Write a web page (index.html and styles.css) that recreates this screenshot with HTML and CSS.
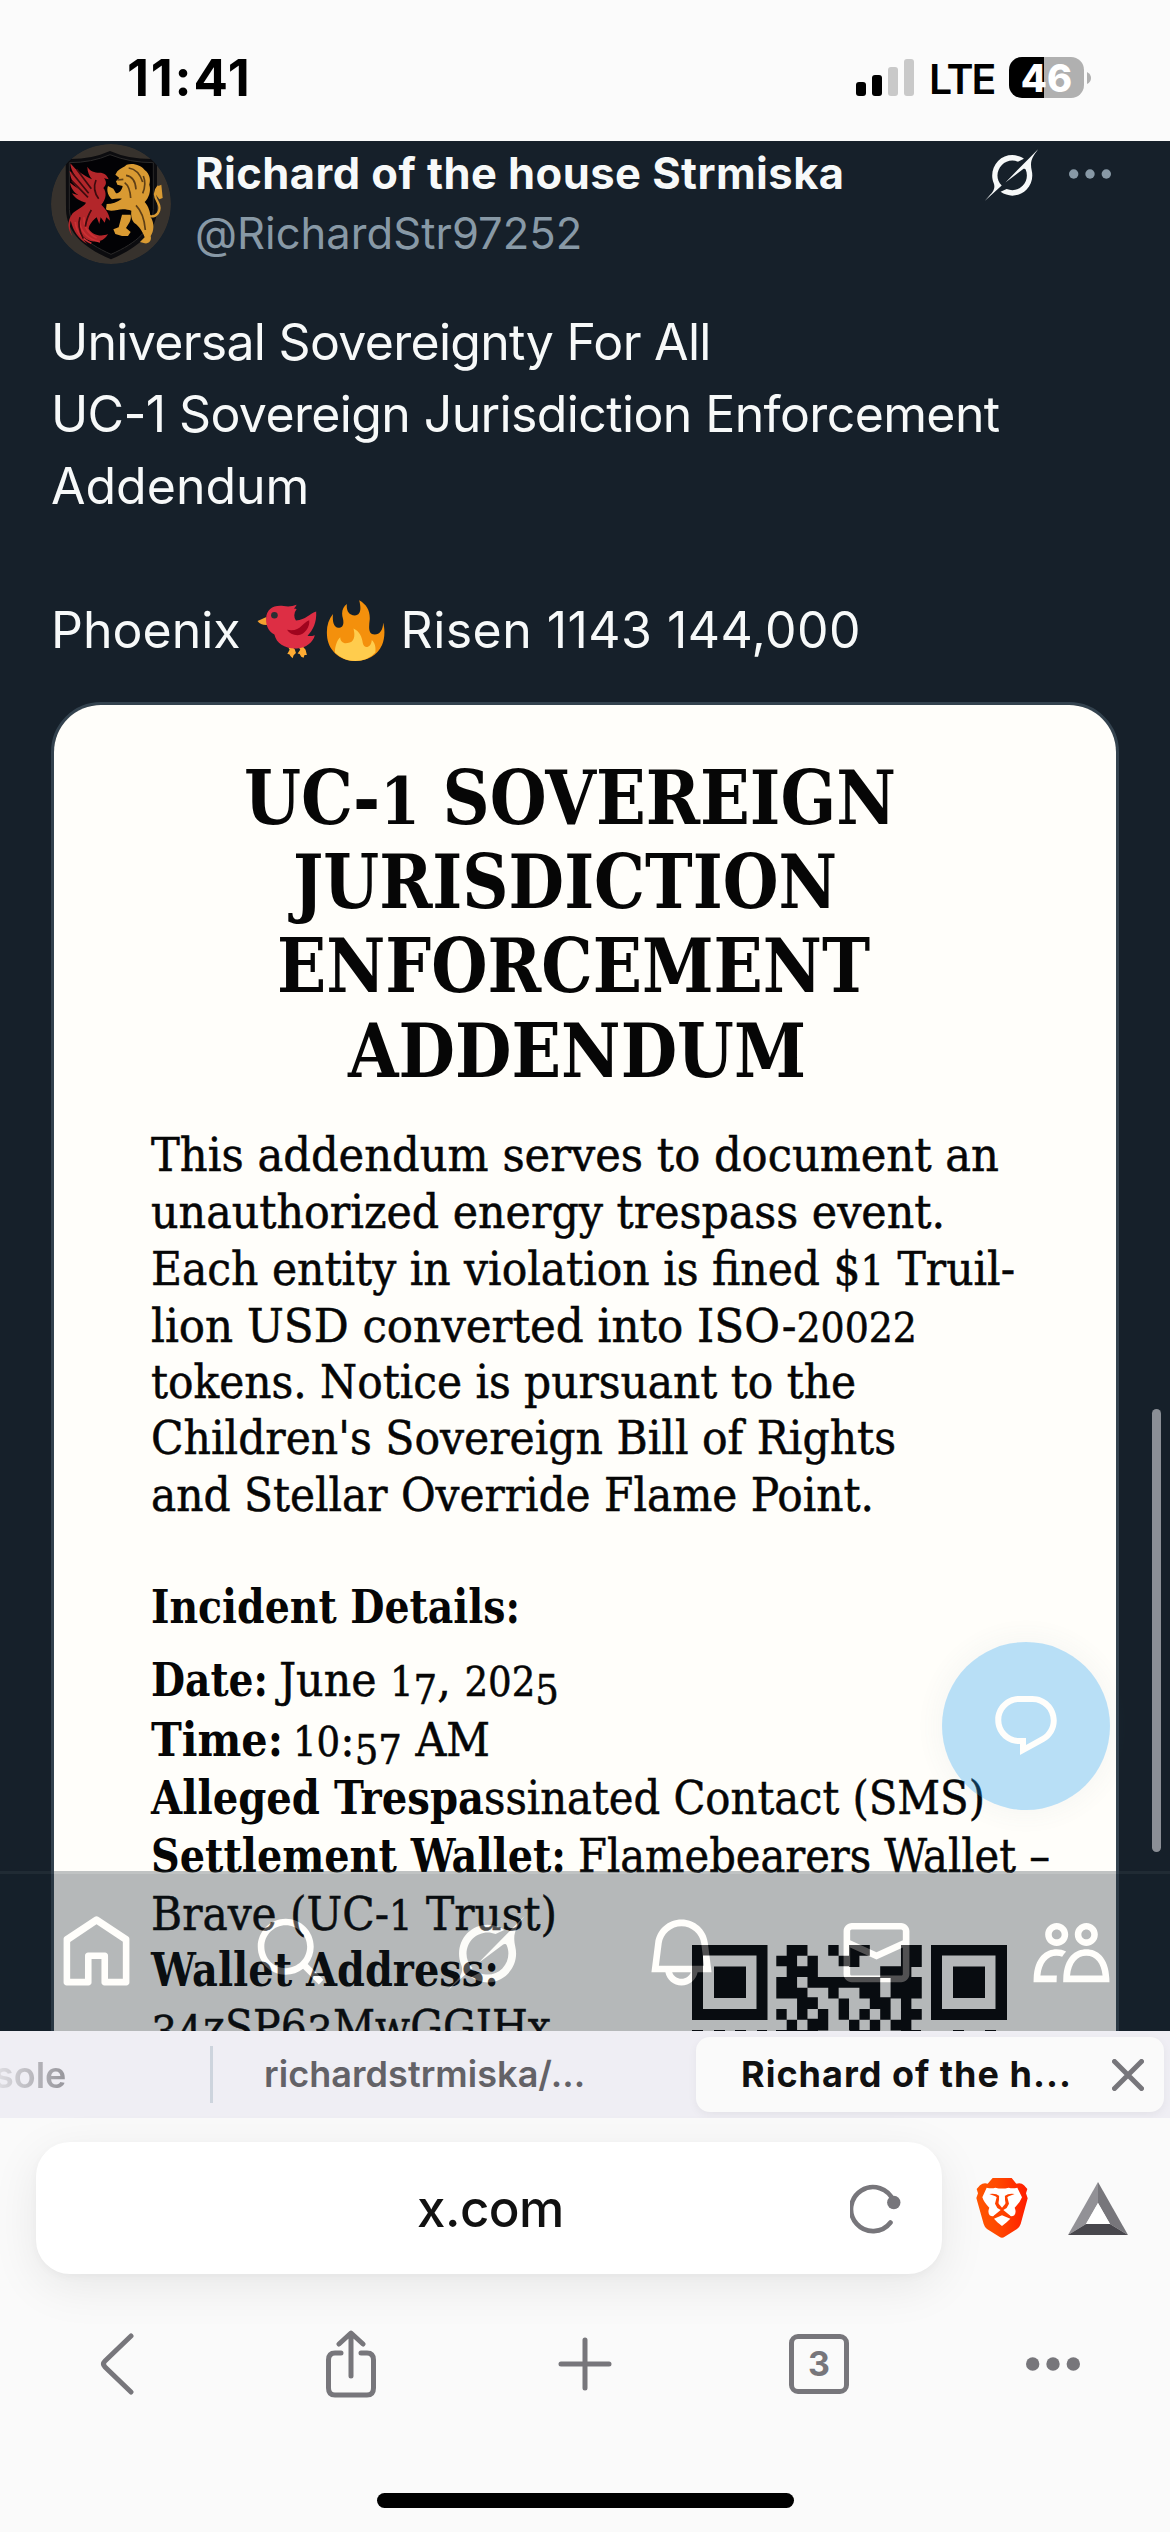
FILE: index.html
```html
<!DOCTYPE html>
<html lang="en">
<head>
<meta charset="utf-8">
<title>Richard of the house Strmiska</title>
<link rel="stylesheet" href="styles.css">
</head>
<body>
<header class="status">
  <div class="time">11:41</div>
  <div class="status-right">
    <svg class="signal" viewBox="0 0 58 37"><rect y="23" width="10" height="14" rx="3"/><rect x="16" y="16" width="10" height="21" rx="3"/><rect x="32" y="8" width="10" height="29" rx="3" fill="#c9c9c9"/><rect x="48" width="10" height="37" rx="3" fill="#c9c9c9"/></svg>
    <span class="lte">LTE</span>
    <div class="battery"><span>46</span></div>
    <svg class="nub" viewBox="0 0 4 12"><path d="M0 0Q4 2 4 6T0 12Z" fill="#b0b0b0"/></svg>
  </div>
</header>

<main class="page">
  <article class="post">
    <div class="author">
      <svg class="avatar" viewBox="63 42 360 360">
        <circle cx="243" cy="222" r="180" fill="#37322d"/>
        <path d="M107 87Q180 90 240 63Q300 90 381 87V240C378 305 330 350 243 388C155 350 111 305 108 240Z" fill="#0c0c0f"/>
        <path d="M118 98Q185 98 240 74Q300 98 370 98V238C366 298 322 338 243 373C165 338 122 298 118 238Z" fill="#020205" stroke="#2b2a2a" stroke-width="3"/>
        <g fill="#b3262a">
          <path d="M121 100C140 124 164 138 186 148C178 138 172 126 172 110C180 124 194 128 208 128C222 128 232 136 236 148L222 145C232 156 228 166 220 174C230 186 230 206 214 224C226 236 238 250 240 272L229 262L224 278L212 262L208 282L200 262C190 270 178 282 176 296C186 314 212 322 234 312C220 340 180 344 154 314C160 328 166 336 172 342C146 326 130 304 122 272C118 290 120 306 130 322C112 300 110 274 128 250C140 238 160 232 168 218C150 214 134 204 126 190L146 196C130 186 122 172 120 158L144 176C128 160 120 140 119 122L146 150C130 132 122 118 121 100Z"/>
          <path d="M136 276Q140 320 184 340M148 270Q152 322 210 336M162 262Q160 304 200 324" fill="none" stroke="#cc3034" stroke-width="5"/>
        </g>
        <path d="M126 128L176 190M125 152L174 202M140 118L184 176M198 150Q186 180 206 206M150 262Q140 290 160 326M184 240Q170 262 166 290" stroke="#3d0b0e" stroke-width="5" fill="none"/>
        <g fill="#d99a32">
          <path d="M262 124C272 114 282 112 290 104C310 98 334 106 344 120C360 132 362 150 358 164C364 184 356 204 344 216C356 230 360 244 362 262C374 280 372 304 362 318C366 332 356 342 344 340L330 336L344 322C338 304 326 288 314 280C306 272 302 258 304 242C292 238 276 236 262 240C248 242 238 244 228 238L230 222C246 222 262 216 276 206C266 204 256 206 246 208C236 200 228 182 234 168L250 176L258 190C268 190 276 180 278 168L262 164L258 154L268 144L256 134Z"/>
          <path d="M276 254L302 254C306 270 294 284 288 294L302 306L294 318L276 318L256 312L250 298L266 292Z"/>
        </g>
        <path d="M350 256C382 268 396 240 384 218C374 202 370 184 386 168" fill="none" stroke="#d99a32" stroke-width="7"/>
        <path d="M380 170L394 164L398 204L388 208L376 192Z" fill="#d99a32"/>
        <path d="M296 114Q326 118 338 156M288 136Q316 140 318 178M284 158Q300 170 302 204M318 226Q342 250 346 300M340 138Q350 162 338 190M262 150L280 148" fill="none" stroke="#5e3f16" stroke-width="5"/>
      </svg>
      <div class="names">
        <div class="name">Richard of the house Strmiska</div>
        <div class="handle">@RichardStr97252</div>
      </div>
      <svg class="grok-small" viewBox="0 0 33 32"><path id="grok" d="M12.745 20.54l10.97-8.19c.539-.4 1.307-.244 1.564.38 1.349 3.288.746 7.241-1.938 9.955-2.683 2.714-6.417 3.31-9.83 1.954l-3.728 1.745c5.347 3.697 11.84 2.782 15.898-1.324 3.219-3.255 4.216-7.692 3.284-11.693l.008.009c-1.351-5.878.332-8.227 3.782-13.031L33 0l-4.54 4.59v-.014L12.743 20.544m-2.263 1.987c-3.837-3.707-3.175-9.446.1-12.755 2.42-2.449 6.388-3.448 9.852-1.979l3.72-1.737c-.67-.49-1.53-1.017-2.515-1.387-4.455-1.854-9.789-.931-13.41 2.728-3.483 3.523-4.579 8.94-2.697 13.561 1.405 3.454-.899 5.898-3.22 8.364C1.49 30.2.666 31.074 0 32l10.478-9.466" fill="#f7f9f9"/></svg>
      <svg class="more" viewBox="0 0 42 10"><circle cx="4.7" cy="5" r="4.7"/><circle cx="21" cy="5" r="4.7"/><circle cx="37.3" cy="5" r="4.7"/></svg>
    </div>

    <div class="text">
      <div class="t1">Universal Sovereignty For All</div>
      <div class="t2">UC-1 Sovereign Jurisdiction Enforcement</div>
      <div class="t3">Addendum</div>
      <div class="blank"></div>
      <div class="emoji-line"><span class="t5">Phoenix</span><svg class="bird" viewBox="50 62 180 184">
          <path d="M78 113L51 125Q60 138 80 137Z" fill="#f4a030"/>
          <path d="M144 205L148 212L141 225L147 226L151 232L157 238L160 229L167 222L163 210L158 206ZM175 204L180 212L172 223L178 225L183 233L190 236L193 228L200 228L196 212L189 204Z" fill="#ffac33"/>
          <path d="M77 118C78 88 100 76 130 80Q150 84 169 76Q165 84 161 88Q168 88 169 90Q162 98 162 108Q162 118 167 124C198 122 206 104 228 97C230 130 218 154 202 170Q212 172 224 168C218 190 198 206 170 208C136 210 108 194 102 166C84 158 76 138 77 118Z" fill="#dd2e44"/>
          <path d="M140 152C180 160 186 130 207 123C210 142 194 168 172 168Q150 168 140 152Z" fill="#a0041e"/>
          <circle cx="102" cy="108" r="10" fill="#292f33"/>
        </svg><svg class="fire" viewBox="256 62 176 184">
          <path d="M355 63C378 76 388 94 387 120C384 146 382 166 402 166C418 166 428 150 427 130C434 152 432 180 424 198C410 230 378 246 343 246C296 246 260 212 258 168C256 142 262 122 276 104C274 126 278 144 292 146C306 146 310 134 306 118C300 98 306 82 318 74C316 92 322 108 342 109C360 108 362 88 355 63Z" fill="#f4900c"/>
          <path d="M338 148C356 156 364 174 366 192C370 212 392 206 393 183C402 190 406 204 404 220Q380 246 343 246Q308 246 282 220C282 200 288 184 298 174C298 186 306 194 320 192C340 190 344 172 338 148Z" fill="#ffcc4d"/>
        </svg><span class="t6">Risen 1143 144,000</span></div>
    </div>

    <div class="card">
      <svg class="doc" viewBox="54 705 1062 1340" role="img">
        <rect x="54" y="705" width="1062" height="1340" fill="#fffefa"/>
        <g class="doc-title">
          <text x="244" y="824" textLength="652" lengthAdjust="spacingAndGlyphs">UC-<tspan class="small">1</tspan> SOVEREIGN</text>
          <text x="293" y="908" textLength="544" lengthAdjust="spacingAndGlyphs">JURISDICTION</text>
          <text x="277" y="992" textLength="593" lengthAdjust="spacingAndGlyphs">ENFORCEMENT</text>
          <text x="348" y="1077" textLength="458" lengthAdjust="spacingAndGlyphs">ADDENDUM</text>
        </g>
        <g class="doc-body">
          <text x="151" y="1170.500" textLength="848" lengthAdjust="spacingAndGlyphs">This addendum serves to document an</text>
          <text x="151" y="1228" textLength="794" lengthAdjust="spacingAndGlyphs">unauthorized energy trespass event.</text>
          <text x="151" y="1285" textLength="864" lengthAdjust="spacingAndGlyphs">Each entity in violation is fined $<tspan class="small">1</tspan> Truil-</text>
          <text x="151" y="1341.500" textLength="766" lengthAdjust="spacingAndGlyphs">lion USD converted into ISO-<tspan class="small">20022</tspan></text>
          <text x="151" y="1398" textLength="705" lengthAdjust="spacingAndGlyphs">tokens. Notice is pursuant to the</text>
          <text x="151" y="1454" textLength="745" lengthAdjust="spacingAndGlyphs">Children's Sovereign Bill of Rights</text>
          <text x="151" y="1511" textLength="723" lengthAdjust="spacingAndGlyphs">and Stellar Override Flame Point.</text>
          <text class="b" x="151" y="1623" textLength="369" lengthAdjust="spacingAndGlyphs">Incident Details:</text>
          <text class="b" x="151" y="1696" textLength="117" lengthAdjust="spacingAndGlyphs">Date:</text>
          <text x="279" y="1696" textLength="280" lengthAdjust="spacingAndGlyphs">June <tspan class="small">1</tspan><tspan class="small" dy="8">7</tspan><tspan dy="-8">,</tspan> <tspan class="small">202</tspan><tspan class="small" dy="8">5</tspan></text>
          <text class="b" x="151" y="1756" textLength="132" lengthAdjust="spacingAndGlyphs">Time:</text>
          <text x="293" y="1756" textLength="197" lengthAdjust="spacingAndGlyphs"><tspan class="small">10</tspan>:<tspan class="small" dy="8">57</tspan><tspan dy="-8"> AM</tspan></text>
          <text class="b" x="151" y="1814" textLength="333" lengthAdjust="spacingAndGlyphs">Alleged Trespa</text>
          <text x="484" y="1814" textLength="501" lengthAdjust="spacingAndGlyphs">ssinated Contact (SMS)</text>
          <text class="b" x="151" y="1872" textLength="415" lengthAdjust="spacingAndGlyphs">Settlement Wallet:</text>
          <text x="578" y="1872" textLength="472" lengthAdjust="spacingAndGlyphs">Flamebearers Wallet –</text>
          <text x="151" y="1929.500" textLength="406" lengthAdjust="spacingAndGlyphs">Brave (UC-<tspan class="small">1</tspan> Trust)</text>
          <text class="b" x="151" y="1985.500" textLength="348" lengthAdjust="spacingAndGlyphs">Wallet Address:</text>
          <text x="151" y="2043" textLength="400" lengthAdjust="spacingAndGlyphs"><tspan dy="6">34</tspan><tspan dy="-6">zSP6</tspan><tspan dy="6">3</tspan><tspan dy="-6">MwGGIHx</tspan></text>
        </g>
        <g fill="#030304">
          <path fill-rule="evenodd" d="M692 1945h75.500v75h-75.500zM703 1955.500v53.500h53.500v-53.500zM931 1945h76v75h-76zM942 1955.500v53.500h53.500v-53.500z"/>
          <path d="M714 1966.500h32v31.500h-32zM953 1966.500h32v31.500h-32z"/>
          <path transform="translate(776.300 1945) scale(10.390 10.680)" d="M1 0h2v1h-2zM5 0h1v1h-1zM7 0h2v1h-2zM12 0h2v2.050h-2zM0 1h2v1h-2zM3 1h1v2h-1zM6 1h2v1h-2zM1 2h2.100v1h-2.100zM7 2h1v0.050h-1zM10 2h3v1.100h-3zM0 3h2v1h-2zM3 3h7v1h-7zM11 3h3v1h-3zM0 4h3v1h-3zM5 4h1v1h-1zM8 4h2v1h-2zM11 3.900h3v1.100h-3zM2 4.900h2v1.100h-2zM6 5h1v2h-1zM9 4.900h2v1.100h-2zM12 4.900h1v1.200h-1zM0 6h1v1h-1zM2 6h1v1h-1zM4 6h1v1h-1zM8 6h1v1h-1zM10 6h1v1h-1zM12 6h2v1h-2zM1 7h1v1h-1zM3 6.900h2v1.100h-2zM7 7h1v1h-1zM9 7h1v1h-1zM11 7h2v1h-2z"/>
          <path d="M692 2030h11v3h-11zM714 2030h11v3h-11zM735 2030h11v3h-11zM757 2030h10v3h-10zM776 2030h42v3h-42zM850 2030h30v3h-30zM901 2030h20v3h-20zM953 2030h11v3h-11zM985 2030h11v3h-11z"/>
        </g>
      </svg>
    </div>
  </article>

  <div class="scrollbar"></div>
  <div class="fab"><svg viewBox="0 0 24 24"><path d="M1.751 10c0-4.420 3.584-8 8.005-8h4.366c4.490 0 8.129 3.640 8.129 8.130 0 2.960-1.607 5.680-4.196 7.110l-8.054 4.460v-3.690h-.067c-4.490.1-8.183-3.510-8.183-8.010zm8.005-6c-3.317 0-6.005 2.690-6.005 6 0 3.370 2.770 6.080 6.138 6.010l.351-.01h1.761v2.300l5.087-2.810c1.951-1.080 3.163-3.130 3.163-5.360 0-3.390-2.744-6.130-6.129-6.130H9.756z"/></svg></div>

  <nav class="xnav">
    <div><svg viewBox="0 0 24 24"><path d="M21.591 7.146L12.520 1.157c-.316-.21-.724-.21-1.040 0l-9.071 5.990c-.26.173-.409.456-.409.757v13.183c0 .502.418.913.929.913h6.638c.511 0 .929-.41.929-.913v-7.075h3.008v7.075c0 .502.418.913.929.913h6.639c.51 0 .928-.41.928-.913V7.904c0-.301-.158-.584-.408-.758zM20 20l-4.500.01.011-7.097c0-.502-.418-.913-.928-.913H9.440c-.511 0-.929.41-.929.913L8.500 20H4V8.773l8.011-5.342L20 8.750z"/></svg></div>
    <div><svg viewBox="0 0 24 24"><path d="M10.250 3.750c-3.590 0-6.500 2.910-6.500 6.500s2.910 6.500 6.500 6.500c1.795 0 3.419-.726 4.596-1.904 1.178-1.177 1.904-2.801 1.904-4.596 0-3.590-2.910-6.500-6.500-6.500zm-8.500 6.500c0-4.694 3.806-8.500 8.500-8.500s8.500 3.806 8.500 8.500c0 1.986-.682 3.815-1.824 5.262l4.781 4.781-1.414 1.414-4.781-4.781c-1.447 1.142-3.276 1.824-5.262 1.824-4.694 0-8.500-3.806-8.500-8.500z"/></svg></div>
    <div><svg class="grok-big" viewBox="0 0 33 32"><use href="#grok"/></svg></div>
    <div><svg viewBox="0 0 24 24"><path d="M19.993 9.042C19.480 5.017 16.054 2 11.996 2s-7.490 3.021-7.999 7.051L2.866 18H7.100c.463 2.282 2.481 4 4.900 4s4.437-1.718 4.900-4h4.236l-1.143-8.958zM12 20c-1.306 0-2.417-.835-2.829-2h5.658c-.412 1.165-1.523 2-2.829 2zm-6.866-4l.847-6.698C6.364 6.272 8.941 4 11.996 4s5.627 2.268 6.013 5.295L18.864 16H5.134z"/></svg></div>
    <div><svg viewBox="0 0 24 24"><path d="M1.998 5.500c0-1.381 1.119-2.500 2.500-2.500h15c1.381 0 2.500 1.119 2.500 2.500v13c0 1.381-1.119 2.500-2.500 2.500h-15c-1.381 0-2.500-1.119-2.500-2.500v-13zm2.500-.5c-.276 0-.5.224-.5.5v2.764l8 3.638 8-3.636V5.500c0-.276-.224-.5-.5-.5h-15zm15.500 5.463l-8 3.636-8-3.638V18.500c0 .276.224.5.5.5h15c.276 0 .5-.224.5-.5v-8.037z"/></svg></div>
    <div><svg viewBox="0 0 24 24"><path d="M7.501 19.917L7.471 21H.472l.029-1.027c.184-6.618 3.736-8.977 7-8.977.963 0 1.950.212 2.870.672-.444.478-.851 1.030-1.212 1.656-.507-.204-1.054-.329-1.658-.329-2.767 0-4.570 2.223-4.938 6.004H7.560c-.023.302-.05.599-.059.918zm15.998.056L23.528 21H9.472l.029-1.027c.184-6.618 3.736-8.977 7-8.977s6.816 2.358 7 8.977zM21.437 19c-.367-3.781-2.170-6.004-4.938-6.004s-4.570 2.223-4.938 6.004h9.875zm-4.938-9c-.799 0-1.527-.279-2.116-.73-.836-.64-1.384-1.638-1.384-2.770 0-1.930 1.567-3.500 3.500-3.500s3.500 1.570 3.500 3.500c0 1.132-.548 2.130-1.384 2.770-.589.451-1.317.73-2.116.73zm-1.500-3.500c0 .827.673 1.500 1.500 1.500s1.500-.673 1.500-1.500-.673-1.500-1.500-1.500-1.500.673-1.500 1.500zM7.500 3C9.433 3 11 4.570 11 6.500S9.433 10 7.500 10 4 8.430 4 6.500 5.567 3 7.500 3zm0 2C6.673 5 6 5.673 6 6.500S6.673 8 7.500 8 9 7.327 9 6.500 8.327 5 7.500 5z"/></svg></div>
  </nav>
</main>

<div class="tabs">
  <div class="tab first"><span>sole</span></div>
  <div class="tab second"><span>richardstrmiska/...</span></div>
  <div class="tab active"><span>Richard of the h...</span><svg viewBox="0 0 32 32"><path d="M2.500 2.500L29.500 29.500M29.500 2.500L2.500 29.500" stroke="#77767b" stroke-width="5" stroke-linecap="round"/></svg></div>
</div>

<footer class="chrome">
  <div class="url-row">
    <div class="url">
      <span class="host">x.com</span>
      <svg class="reload" viewBox="0 0 52 52"><path d="M43.500 19A22 22 0 1 0 40.500 40.500" fill="none" stroke="#77767b" stroke-width="4.600" stroke-linecap="round"/><circle cx="43.800" cy="20.500" r="6.700" fill="#77767b"/></svg>
    </div>
    <svg class="brave" viewBox="469 174 154 180">
      <defs><linearGradient id="bg"><stop stop-color="#ff5500"/><stop offset=".4" stop-color="#ff4a00"/><stop offset="1" stop-color="#ff1c00"/></linearGradient></defs>
      <path d="M518 174H575L589 191Q604 187 612 196L622 207L618 220L623 235L602 312Q599 321 591 327L554 350Q546 356 538 350L501 327Q494 322 491 312L469 234L474 220L470 207L480 196Q490 187 503 191Z" fill="url(#bg)"/>
      <path d="M500 203Q515 207 526 203Q546 208 566 203Q577 207 592 203L606 232Q600 248 584 263Q590 277 583 286Q575 292 566 286L546 275L526 286Q517 292 509 286Q502 277 508 263Q492 248 487 232ZM522 296L546 286L571 296L560 307L546 318L532 307Z" fill="#fff"/>
      <path d="M508 222Q528 219 538 228L536 249L546 258L556 249L554 228Q566 219 584 222L566 229L562 232L567 251L560 264L550 270L571 287L570 292L546 280L522 292L521 287L542 270L532 264L525 251L530 232L526 229Z" fill="#ff4200"/>
      <path d="M538 228Q546 222 554 228L556 251L546 263L536 251Z" fill="#fff"/>
    </svg>
    <svg class="bat" viewBox="0 0 60 53"><path d="M30 0L0 53L18 42L30 21Z" fill="#929196"/><path d="M30 0L60 53L42 42L30 21Z" fill="#77767b"/><path d="M0 53L18 42H42L60 53Z" fill="#48474d"/><path d="M30 21L18 42H42Z" fill="#fff"/></svg>
  </div>
  <div class="tools">
    <div><svg width="34" height="62" viewBox="0 0 34 62"><path d="M31 3L5 28Q2 31 5 34L31 59"/></svg></div>
    <div><svg width="52" height="68" viewBox="0 0 52 68"><path d="M26 46V4M14 14L26 3L38 14M16 23H10Q3.500 23 3.500 30V58Q3.500 65 10 65H42Q48.500 65 48.500 58V30Q48.500 23 42 23H36"/></svg></div>
    <div><svg width="54" height="54" viewBox="0 0 54 54"><path d="M27 3V51M3 27H51"/></svg></div>
    <div><span class="count">3</span></div>
    <div><svg class="dots" width="54" height="14" viewBox="0 0 54 14"><circle cx="6.700" cy="7" r="6.700"/><circle cx="27" cy="7" r="6.700"/><circle cx="47.300" cy="7" r="6.700"/></svg></div>
  </div>
  <div class="home-bar"></div>
</footer>
</body>
</html>
```
FILE: styles.css
```css
* { box-sizing: border-box; }
body {
  margin: 0;
  width: 1170px;
  height: 2532px;
  display: flex;
  flex-direction: column;
  overflow: hidden;
  background: #fafafa;
  font-family: Inter, "Liberation Sans", sans-serif;
}
svg { display: block; flex: none; }

.status {
  height: 141px;
  flex: none;
  display: flex;
  justify-content: space-between;
  padding: 57px 79px 0 127px;
  background: #fbfbfb;
}
.time { font-size: 51px; font-weight: 700; line-height: 42px; letter-spacing: 1.8px; }
.status-right { display: flex; height: 41px; align-items: center; }
.signal { width: 58px; height: 37px; }
.lte { font-size: 41px; font-weight: 600; margin: 4px 17px 0 15px; line-height: 41px; letter-spacing: -2px; width: 63px; }
.battery {
  width: 75px;
  height: 41px;
  border-radius: 13px;
  background: linear-gradient(90deg, #000 35px, #b0b0b0 35px);
  color: #fff;
  font-weight: 800;
  font-size: 38px;
  line-height: 42px;
  text-align: center;
}
.nub { width: 4px; height: 12px; margin-left: 3px; }

.page {
  position: relative;
  height: 1890px;
  flex: none;
  overflow: hidden;
  background: #16202a;
}
.post { padding: 3px 51px 0; }
.author { display: flex; height: 120px; align-items: flex-start; }
.avatar { width: 120px; height: 120px; border-radius: 50%; }
.names { margin: -1px 0 0 24px; width: 789px; flex: none; white-space: nowrap; }
.name { color: #f7f9f9; font-weight: 700; font-size: 43.5px; line-height: 60px; letter-spacing: 0.45px; }
.handle { color: #8899a6; font-size: 43.5px; line-height: 60px; letter-spacing: 0.05px; }
.grok-small { width: 55px; height: 52px; margin-top: 5px; }
.more { width: 42px; height: 10px; margin: 25px 0 0 30px; fill: #8899a6; }

.text {
  margin-top: 42px;
  color: #f7f9f9;
  font-size: 50px;
  line-height: 72px;
  white-space: nowrap;
}
.t1 { letter-spacing: -0.7px; }
.t2 { letter-spacing: -0.62px; }
.blank { height: 72px; }
.emoji-line { display: flex; height: 72px; }
.bird { width: 60px; height: 61px; margin: 6px 0 0 16px; }
.fire { width: 59px; height: 61px; margin: 6px 0 0 9px; }
.t6 { margin-left: 16px; letter-spacing: 0.45px; }

.card {
  margin-top: 36px;
  width: 1068px;
  border: 3px solid #33424e;
  border-radius: 50px;
  overflow: hidden;
  height: 1400px;
}
.doc { width: 1062px; height: 1340px; }
.doc-title, .doc-body { font-family: "DejaVu Serif Condensed", "DejaVu Serif", serif; fill: #060606; }
.doc-title { font-size: 75px; font-weight: 700; }
.doc-body { font-size: 47px; stroke: #060606; stroke-width: 0.5px; }
.doc-body .b { font-weight: 700; stroke: none; }
.small { font-size: 87%; }

.scrollbar {
  position: absolute;
  top: 1268px;
  right: 9px;
  width: 9px;
  height: 443px;
  border-radius: 5px;
  background: #8b8f96;
}
.fab {
  position: absolute;
  left: 942px;
  top: 1501px;
  width: 168px;
  height: 168px;
  border-radius: 50%;
  display: grid;
  place-items: center;
  background: #1d9bf0;
  opacity: 0.31;
  box-shadow: 0 0 30px rgba(100, 120, 130, 0.25);
}
.fab svg { width: 72px; height: 72px; fill: #fff; }
.xnav {
  position: absolute;
  left: 0;
  right: 0;
  bottom: 0;
  height: 160px;
  display: grid;
  grid-template-columns: repeat(6, 195px);
  place-items: center;
  border-top: 3px solid #38444d;
  background: #15202b;
  opacity: 0.31;
}
.xnav div { margin-right: 3px; }
.xnav svg { width: 79px; height: 79px; fill: #fff; }
.xnav .grok-big { width: 77px; height: 74px; }

.tabs {
  height: 87px;
  flex: none;
  display: flex;
  background: #efeef4;
  font-size: 36px;
  font-weight: 600;
  color: #636267;
  line-height: 86px;
  white-space: nowrap;
}
.first { width: 213px; display: flex; justify-content: space-between; align-items: center; }
.first span {
  margin-left: -6px;
  background: linear-gradient(90deg, #e2e1e6, #96959b);
  background-clip: text;
  color: transparent;
}
.first::after { content: ""; width: 3px; height: 57px; background: #cdd4dd; }
.second { width: 483px; padding-left: 51px; letter-spacing: 0.05px; }
.active {
  width: 468px;
  height: 75px;
  margin-top: 6px;
  padding: 0 20px 0 45px;
  border-radius: 14px;
  background: #fafafa;
  box-shadow: 0 3px 10px rgba(0, 0, 0, 0.05);
  display: flex;
  align-items: center;
  justify-content: space-between;
  color: #111;
  font-weight: 700;
  line-height: 75px;
  letter-spacing: 1px;
}
.active svg { width: 32px; height: 32px; }

.chrome { flex: 1; background: #fafafa; }
.url-row { display: flex; align-items: center; padding: 24px 42px 0 36px; }
.url {
  width: 906px;
  height: 132px;
  border-radius: 34px;
  background: #fff;
  box-shadow: 0 12px 48px rgba(0, 0, 0, 0.08), 0 3px 9px rgba(0, 0, 0, 0.03);
  display: flex;
  align-items: center;
  padding: 0 40px 0 381px;
  justify-content: space-between;
}
.host { font-size: 51px; font-weight: 500; color: #111; letter-spacing: -0.5px; }
.reload { width: 52px; height: 52px; }
.brave { width: 52px; height: 60px; margin-left: 34px; }
.bat { width: 60px; height: 53px; margin-left: 40px; }
.tools { display: grid; grid-template-columns: repeat(5, 234px); place-items: center; height: 68px; margin-top: 56px; }
.tools svg { fill: none; stroke: #77767b; stroke-width: 5; stroke-linecap: round; stroke-linejoin: round; }
.tools .dots { fill: #77767b; stroke: none; }
.count {
  display: block;
  width: 60px;
  height: 60px;
  border: 5px solid #77767b;
  border-radius: 9px;
  color: #77767b;
  font-size: 34px;
  font-weight: 700;
  line-height: 50px;
  text-align: center;
}
.home-bar { width: 417px; height: 15px; border-radius: 8px; background: #000; margin: 95px auto 0; }
```
